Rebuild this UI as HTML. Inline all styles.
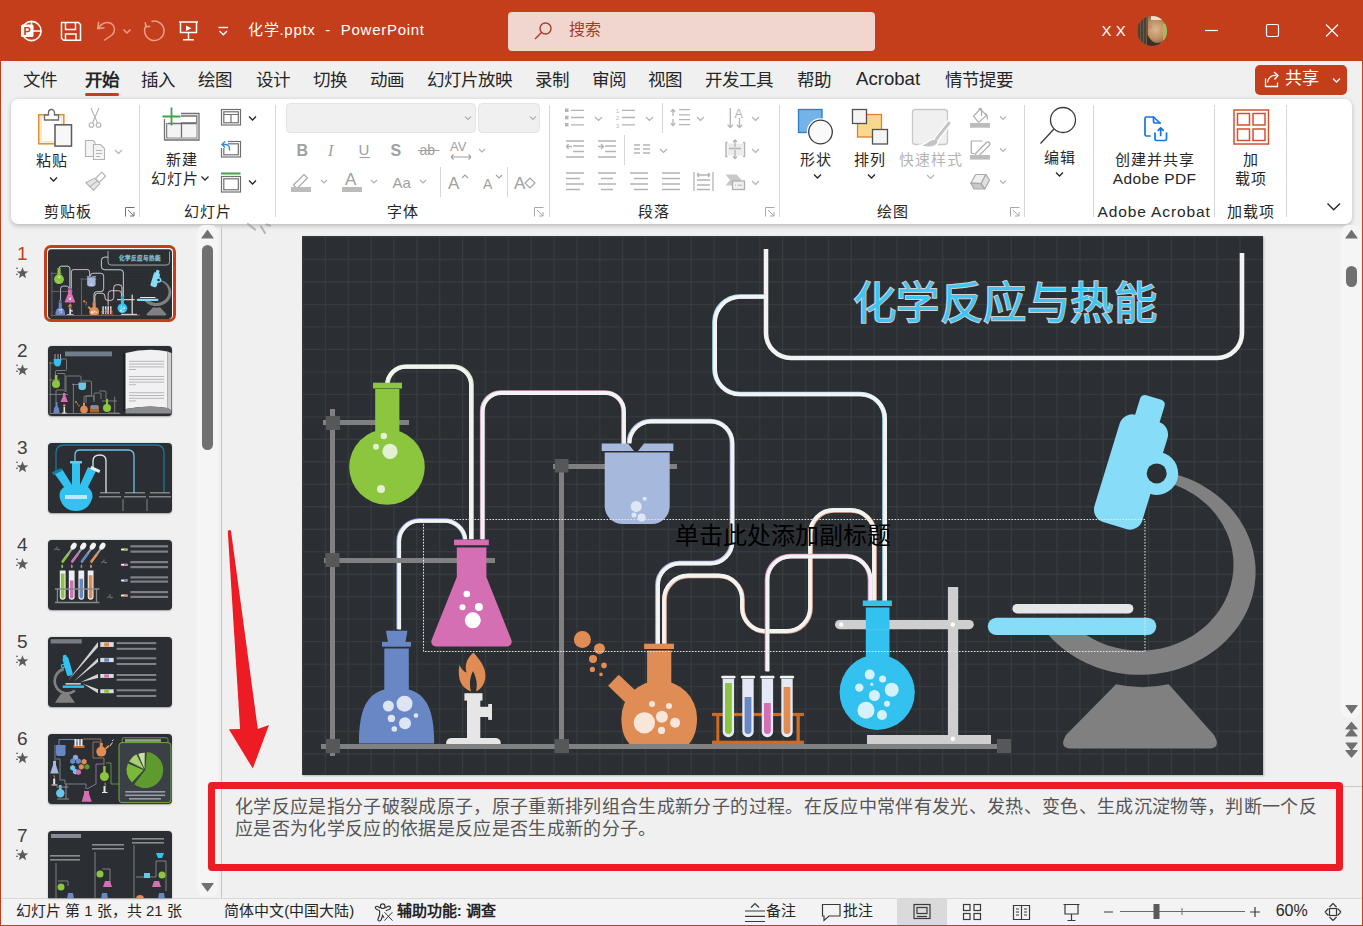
<!DOCTYPE html>
<html lang="zh-CN"><head><meta charset="utf-8">
<style>
*{margin:0;padding:0;box-sizing:border-box}
html,body{width:1363px;height:926px;overflow:hidden}
body{position:relative;background:#f0f0f0;font-family:"Liberation Sans",sans-serif;color:#262626}
.a{position:absolute}
#title{left:0;top:0;width:1363px;height:61px;background:#c43e1c}
#tabs{left:0;top:61px;width:1363px;height:37px;background:#f0f0f0}
.tab{position:absolute;top:68px;font-size:17.5px;line-height:24px;color:#262626;white-space:nowrap}
#ribbon{left:11px;top:98.5px;width:1341px;height:125.5px;background:#fff;border-radius:7px;box-shadow:0 1.5px 4px rgba(0,0,0,0.22)}
.lbl{position:absolute;font-size:14px;line-height:18px;color:#262626;white-space:nowrap}
.sep{position:absolute;width:1px;background:#d4d4d4}
#status{left:0;top:898px;width:1363px;height:28px;background:#f3f3f3;border-top:1px solid #d9d9d9}
.st{position:absolute;top:902px;font-size:15px;line-height:18px;color:#262626;white-space:nowrap}
</style></head>
<body>
<div id="title" class="a"></div>
<div id="tabs" class="a"></div>
<div id="ribbon" class="a"></div>
<div id="status" class="a"></div>

<!-- TITLE BAR CONTENT -->
<svg class="a" style="left:0;top:0" width="1363" height="61" viewBox="0 0 1363 61">
 <g fill="none" stroke="#fff" stroke-width="1.6">
  <circle cx="31.5" cy="31" r="9.6"/>
  <path d="M31.5 21.5V31H41"/>
 </g>
 <rect x="21" y="24.5" width="12.5" height="12.5" rx="1.5" fill="#fff"/>
 <text x="23.6" y="35" font-family="Liberation Sans" font-weight="bold" font-size="11" fill="#c43e1c">P</text>
 <!-- save -->
 <g fill="none" stroke="#fff" stroke-width="1.5">
  <path d="M61.5 22.5H78.5L80.5 24.5V40.2H63.5L61.5 38.2Z"/>
  <path d="M65.5 22.5V29.5H75.5V22.5"/>
  <path d="M65.5 40V34H76V40"/>
 </g>
 <!-- undo faded -->
 <g fill="none" stroke="#e8a08c" stroke-width="1.5">
  <path d="M98 28.5C101 24 104 22.5 107.5 22.5C111.5 22.5 114.5 25.5 114.5 29.5C114.5 32 113.5 33.5 112 35L104 40.5"/>
  <path d="M98.6 21.8L97.8 28.6L104.5 27.8"/>
  <path d="M123.5 29.5L127 33L130.5 29.5"/>
  <path d="M151.5 21.5A9.7 9.7 0 1 1 146.6 24.9"/>
  <path d="M145.2 22.2L145.9 26.8L150.2 26.2"/>
 </g>
 <!-- present -->
 <g fill="none" stroke="#fff" stroke-width="1.5">
  <path d="M179 22H198"/>
  <path d="M180.5 22V32.5H196.5V22"/>
  <path d="M188.5 32.5V39.5M183 39.8H194"/>
 </g>
 <path d="M186 25.5L191.5 28.2L186 31Z" fill="#fff"/>
 <g fill="none" stroke="#fff" stroke-width="1.4">
  <path d="M218.5 27.5H228"/>
  <path d="M219.5 31L223.3 34.8L227 31"/>
 </g>
 <!-- window controls -->
 <g fill="none" stroke="#fff" stroke-width="1.2">
  <path d="M1205 30.5H1218"/>
  <rect x="1266.5" y="24.5" width="12" height="12" rx="1.5"/>
  <path d="M1326 24.5L1338 36.5M1338 24.5L1326 36.5"/>
 </g>
</svg>
<div class="a" style="left:248px;top:20px;font-size:15px;line-height:20px;color:#fff;white-space:nowrap;letter-spacing:0.72px">化学.pptx&nbsp; - &nbsp;PowerPoint</div>
<div class="a" style="left:508px;top:11.5px;width:367px;height:39px;background:#f0d6cf;border-radius:4px"></div>
<svg class="a" style="left:530px;top:18px" width="26" height="26" viewBox="0 0 26 26">
 <g fill="none" stroke="#a8402a" stroke-width="1.4"><circle cx="15.5" cy="10.5" r="5.5"/><path d="M11.5 14.5L5 21"/></g>
</svg>
<div class="a" style="left:569px;top:19px;font-size:16px;line-height:22px;color:#a33a22;white-space:nowrap">搜索</div>
<div class="a" style="left:1101.5px;top:21.8px;font-size:15px;line-height:18px;color:#fff;white-space:nowrap">X X</div>
<svg class="a" style="left:1137px;top:16px" width="30" height="30" viewBox="0 0 30 30">
<defs><clipPath id="av"><circle cx="15" cy="15" r="15"/></clipPath>
<radialGradient id="face" cx="0.62" cy="0.45" r="0.5"><stop offset="0" stop-color="#d8b890"/><stop offset="0.6" stop-color="#c09060"/><stop offset="1" stop-color="#8a6a48"/></radialGradient></defs>
<g clip-path="url(#av)">
<rect width="30" height="30" fill="url(#face)"/>
<rect x="26" y="8" width="4" height="16" fill="#a8b860"/>
<rect x="14" y="0" width="16" height="4" fill="#e8e0d0"/>
<rect x="0" y="0" width="11" height="30" fill="#6a5a44"/>
<path d="M2 0V30M5 0V30M8 0V30" stroke="#3a3228" stroke-width="1.2"/>
<path d="M10 18Q16 30 24 26L22 30H10Z" fill="#3a3026"/>
<circle cx="13" cy="11" r="2" fill="#c88070" opacity="0.6"/>
</g>
</svg>


<!-- TABS -->
<div class="tab" style="left:22.9px">文件</div>
<div class="tab" style="left:84.7px;font-weight:bold">开始</div>
<div class="tab" style="left:141.1px">插入</div>
<div class="tab" style="left:198.4px">绘图</div>
<div class="tab" style="left:255.5px">设计</div>
<div class="tab" style="left:312.8px">切换</div>
<div class="tab" style="left:370.0px">动画</div>
<div class="tab" style="left:427.3px">幻灯片放映</div>
<div class="tab" style="left:534.8px">录制</div>
<div class="tab" style="left:592.0px">审阅</div>
<div class="tab" style="left:648.1px">视图</div>
<div class="tab" style="left:705.3px">开发工具</div>
<div class="tab" style="left:796.9px">帮助</div>
<div class="tab" style="left:856.0px;font-size:18.6px;top:67px">Acrobat</div>
<div class="tab" style="left:944.9px">情节提要</div>
<div class="a" style="left:85px;top:92.5px;width:34px;height:3px;border-radius:2px;background:#c43e1c"></div>
<div class="a" style="left:1255px;top:65px;width:92px;height:30px;border-radius:5px;background:#c43e1c"></div>
<svg class="a" style="left:1255px;top:65px" width="92" height="30" viewBox="0 0 92 30">
 <g fill="none" stroke="#fff" stroke-width="1.3">
  <path d="M10.5 13.5V21.5H22.5V17.5"/>
  <path d="M12.5 17.5C13 12.5 16.5 10 21.5 10.5"/>
  <path d="M19 7L23 10.5L19.5 14.5"/>
  <path d="M78 13.5L81.5 17L85 13.5"/>
 </g>
</svg>
<div class="a" style="left:1284.5px;top:67px;font-size:17px;line-height:24px;color:#fff;white-space:nowrap">共享</div>


<!-- RIBBON -->
<div class="a" style="left:-32.5px;top:202.5px;width:200px;text-align:center;font-size:15px;line-height:18px;color:#262626;white-space:nowrap;letter-spacing:1px;text-indent:1px">剪贴板</div>
<div class="a" style="left:107.8px;top:202.5px;width:200px;text-align:center;font-size:15px;line-height:18px;color:#262626;white-space:nowrap;letter-spacing:1px;text-indent:1px">幻灯片</div>
<div class="a" style="left:302.0px;top:202.5px;width:200px;text-align:center;font-size:15px;line-height:18px;color:#262626;white-space:nowrap;letter-spacing:1px;text-indent:1px">字体</div>
<div class="a" style="left:553.8px;top:202.5px;width:200px;text-align:center;font-size:15px;line-height:18px;color:#262626;white-space:nowrap;letter-spacing:1px;text-indent:1px">段落</div>
<div class="a" style="left:792.0px;top:202.5px;width:200px;text-align:center;font-size:15px;line-height:18px;color:#262626;white-space:nowrap;letter-spacing:1px;text-indent:1px">绘图</div>
<div class="a" style="left:1150.5px;top:202.5px;width:200px;text-align:center;font-size:15px;line-height:18px;color:#262626;white-space:nowrap;letter-spacing:1px;text-indent:1px">加载项</div>
<div class="a" style="left:1053.7px;top:202.5px;width:200px;text-align:center;font-size:15.5px;line-height:18px;color:#262626;white-space:nowrap;letter-spacing:0.9px;text-indent:0.9px">Adobe Acrobat</div>
<div class="a" style="left:-48.2px;top:151.5px;width:200px;text-align:center;font-size:15px;line-height:18px;color:#262626;white-space:nowrap;letter-spacing:1px;text-indent:1px">粘贴</div>
<div class="a" style="left:81.7px;top:150.5px;width:200px;text-align:center;font-size:15px;line-height:18px;color:#262626;white-space:nowrap;letter-spacing:1px;text-indent:1px">新建</div>
<div class="a" style="left:74.0px;top:169.5px;width:200px;text-align:center;font-size:15px;line-height:18px;color:#262626;white-space:nowrap;letter-spacing:1px;text-indent:1px">幻灯片</div>
<div class="a" style="left:715.6px;top:150.5px;width:200px;text-align:center;font-size:15px;line-height:18px;color:#262626;white-space:nowrap;letter-spacing:1px;text-indent:1px">形状</div>
<div class="a" style="left:769.8px;top:150.5px;width:200px;text-align:center;font-size:15px;line-height:18px;color:#262626;white-space:nowrap;letter-spacing:1px;text-indent:1px">排列</div>
<div class="a" style="left:830.0px;top:150.5px;width:200px;text-align:center;font-size:15px;line-height:18px;color:#b4b4b4;white-space:nowrap;letter-spacing:1px;text-indent:1px">快速样式</div>
<div class="a" style="left:959.0px;top:148.5px;width:200px;text-align:center;font-size:15px;line-height:18px;color:#262626;white-space:nowrap;letter-spacing:1px;text-indent:1px">编辑</div>
<div class="a" style="left:1054.6px;top:151px;width:200px;text-align:center;font-size:15px;line-height:18px;color:#262626;white-space:nowrap;letter-spacing:1px;text-indent:1px">创建并共享</div>
<div class="a" style="left:1054.4px;top:169.5px;width:200px;text-align:center;font-size:15.5px;line-height:18px;color:#262626;white-space:nowrap;letter-spacing:0.4px;text-indent:0.4px">Adobe PDF</div>
<div class="a" style="left:1150.5px;top:151px;width:200px;text-align:center;font-size:15px;line-height:18px;color:#262626;white-space:nowrap;letter-spacing:1px;text-indent:1px">加</div>
<div class="a" style="left:1150.5px;top:169.5px;width:200px;text-align:center;font-size:15px;line-height:18px;color:#262626;white-space:nowrap;letter-spacing:1px;text-indent:1px">载项</div>
<svg class="a" style="left:0;top:98px" width="1363" height="126" viewBox="0 98 1363 126">
<g fill="none" stroke="#d6d6d6" stroke-width="1">
 <path d="M139.5 105V217M275.5 105V217M549.5 105V217M779.5 105V217M1024.5 105V217M1093.5 105V217M1214.5 105V217M1286.5 105V217"/>
 <path d="M662.5 103V133M624.5 135V165M440.5 167V197M507.5 167V197"/>
</g>
<!-- font boxes -->
<rect x="286.5" y="103.5" width="189" height="29" rx="4" fill="#f0f0f0" stroke="#e3e3e3"/>
<rect x="478.5" y="103.5" width="61" height="29" rx="4" fill="#f0f0f0" stroke="#e3e3e3"/>
<!-- launchers -->
<g fill="none" stroke="#707070" stroke-width="1">
 <path d="M125.5 216.5V207.5H134.5M128 210L134 216M134 212V216H130"/>
</g>
<g fill="none" stroke="#a8a8a8" stroke-width="1">
 <path d="M534.5 216.5V207.5H543.5M537 210L543 216M543 212V216H539"/>
 <path d="M765.5 216.5V207.5H774.5M768 210L774 216M774 212V216H770"/>
 <path d="M1010.5 216.5V207.5H1019.5M1013 210L1019 216M1019 212V216H1015"/>
</g>
<!-- chevrons dark -->
<g fill="none" stroke="#262626" stroke-width="1.3">
 <path d="M50 177.5L53.5 181L57 177.5"/>
 <path d="M201.5 176.5L205 180L208.5 176.5"/>
 <path d="M249 116.5L252.5 120L256 116.5"/>
 <path d="M249 180.5L252.5 184L256 180.5"/>
 <path d="M814 174.5L817.5 178L821 174.5"/>
 <path d="M868 174.5L871.5 178L875 174.5"/>
 <path d="M1056 172.5L1059.5 176L1063 172.5"/>
 <path d="M1327.5 203.5L1333.7 209.8L1340 203.5"/>
</g>
<!-- chevrons faded -->
<g fill="none" stroke="#b0b0b0" stroke-width="1.1">
 <path d="M115 150L118.5 153.5L122 150"/>
 <path d="M465 116.5L468 119.5L471 116.5M530 116.5L533 119.5L536 116.5"/>
 <path d="M479 149L482 152L485 149M321 180L324 183L327 180M371 180L374 183L377 180M420 180L423 183L426 180"/>
 <path d="M595 117L598.5 120.5L602 117M646 117L649.5 120.5L653 117M697 117L700.5 120.5L704 117M752 117L755.5 120.5L759 117"/>
 <path d="M660 149L663.5 152.5L667 149M752 149L755.5 152.5L759 149M752 181L755.5 184.5L759 181"/>
 <path d="M927 175L930.5 178.5L934 175M1000 116.5L1003 119.5L1006 116.5M1000 148.5L1003 151.5L1006 148.5M1000 180.5L1003 183.5L1006 180.5"/>
</g>
<!-- paste -->
<rect x="38.8" y="114.8" width="25" height="29" fill="#fff" stroke="#e8912d" stroke-width="1.6"/>
<rect x="41" y="117" width="20.6" height="24.6" fill="#fff" stroke="#fbe3b0" stroke-width="1.4"/>
<path d="M44.5 120V115H48.5V112.5A3 3 0 0 1 54.5 112.5V115H58.5V120Z" fill="#fff" stroke="#6b6b6b" stroke-width="1.3"/>
<rect x="55" y="124.8" width="16.5" height="21.3" fill="#f7f7f7" stroke="#5a5a5a" stroke-width="1.5"/>
<!-- scissors -->
<g fill="none" stroke="#b4b4b4" stroke-width="1.1">
 <path d="M91 108L97.5 123M99 108L92.5 123"/>
 <circle cx="91.5" cy="125" r="2.3"/><circle cx="98.5" cy="125" r="2.3"/>
</g>
<!-- copy -->
<g fill="#f4f4f4" stroke="#b4b4b4" stroke-width="1.1">
 <path d="M85.5 140.5H93L95 142.5V156.5H85.5Z"/>
 <path d="M93.5 144.5H100.5L104.5 148.5V159.5H93.5Z"/>
 <path d="M96 150.5H102M96 153.5H102M96 156.5H100" fill="none"/>
</g>
<!-- brush -->
<g stroke="#b4b4b4" stroke-width="1.1" stroke-linejoin="round">
 <path d="M101.8 172.2L105.6 176L99.3 182.3L95.5 178.5Z" fill="#fff"/>
 <path d="M85.8 182.5L94.8 178.2L99.8 183.6L93.6 190.3Z" fill="#e6e6e6"/>
 <path d="M89.5 187L97.3 180.9" fill="none"/>
</g>
<!-- new slide -->
<g fill="none" stroke="#707070" stroke-width="1.3">
 <path d="M164.5 119V140H199V113.5H181"/>
 <path d="M166.8 123V137.8H196.8V116H181"/>
 <path d="M181.5 123V137.5M181 123H196.5"/>
</g>
<rect x="167.5" y="123.5" width="29" height="14" fill="#f4f4f4"/>
<path d="M181.5 123.5V137.5M167.5 123.5H196.5" stroke="#707070" stroke-width="1.3"/>
<path d="M171.5 107.5V125.5M162.5 116.5H180.5" stroke="#3ea34b" stroke-width="1.8"/>
<!-- layout -->
<g fill="none" stroke="#707070" stroke-width="1.2">
 <rect x="221.5" y="109.5" width="19" height="15.5"/>
 <rect x="223.8" y="111.8" width="14.5" height="11"/>
 <path d="M223.8 114.5H238.3M231 114.5V122.8"/>
 <rect x="221.5" y="141.5" width="19" height="15.5"/>
 <rect x="223.8" y="143.8" width="14.5" height="11"/>
 <rect x="221.5" y="176.5" width="19" height="15.5"/>
 <rect x="223.8" y="178.8" width="14.5" height="11"/>
</g>
<path d="M221 173.5H240.5" stroke="#3ea34b" stroke-width="2"/>
<rect x="220" y="139" width="8" height="9" fill="#fff"/>
<path d="M222.5 144.5H225.5A4 4 0 0 1 229.5 148.5V150.5" fill="none" stroke="#2a8ad4" stroke-width="1.4"/>
<path d="M225 141.5L222 144.5L225 147.5" fill="none" stroke="#2a8ad4" stroke-width="1.4"/>
<!-- font boxes moved -->
<g fill="#a0a0a0" font-family="Liberation Sans">
 <text x="296.5" y="156" font-size="16" font-weight="bold">B</text>
 <text x="328" y="156" font-size="16" font-style="italic" font-family="Liberation Serif">I</text>
 <text x="358.5" y="155" font-size="15">U</text>
 <text x="390.5" y="156" font-size="16" font-weight="bold">S</text>
 <text x="419.5" y="155" font-size="14">ab</text>
 <text x="450" y="151" font-size="13">AV</text>
 <text x="392.5" y="188" font-size="15">Aa</text>
 <text x="448" y="189" font-size="17">A</text>
 <text x="483" y="189" font-size="14">A</text>
 <text x="514" y="189" font-size="17">A</text>
</g>
<g fill="none" stroke="#a0a0a0" stroke-width="1.1">
 <path d="M359.5 157.5H370"/>
 <path d="M418 150.5H439.5"/>
 <path d="M451 157H471M451 157L453.5 154.5M451 157L453.5 159.5M471 157L468.5 154.5M471 157L468.5 159.5"/>
 <path d="M462 178L465 175L468 178M496 175L499 178L502 175"/>
 <path d="M525 183L530 178L535 183L530 188Z" fill="#fff"/>
</g>
<path d="M293.5 185L304 174.5L307.5 178L297 188.5Z" fill="#fff" stroke="#a8a8a8" stroke-width="1.2"/>
<rect x="291" y="187" width="20" height="5" fill="#bcbcbc"/>
<rect x="342" y="187" width="20" height="5" fill="#bcbcbc"/>
<text x="345" y="185" font-family="Liberation Sans" font-size="17" fill="#a0a0a0">A</text>
<!-- paragraph -->
<g fill="#b4b4b4">
 <rect x="565" y="108.5" width="3.5" height="3.5"/><rect x="565" y="115.8" width="3.5" height="3.5"/><rect x="565" y="123" width="3.5" height="3.5"/>
</g>
<g fill="none" stroke="#b4b4b4" stroke-width="1.3">
 <path d="M571 110.3H584M571 117.5H584M571 124.8H584"/>
 <path d="M622 110.3H635M622 117.5H635M622 124.8H635"/>
 <path d="M679 109.7H690M679 114.8H690M679 119.7H690M679 124.7H690M673 109.5V116M670.8 111.7L673 109.5L675.2 111.7M673 119V125.5M670.8 123.3L673 125.5L675.2 123.3"/>
 <path d="M730.3 108V127.5M727.6 124.8L730.3 127.5L733 124.8M739.5 118V127.5M736.8 124.8L739.5 127.5L742.2 124.8"/>
 <path d="M566 141H584M573 146H584M573 151.5H584M566 157H584M568.5 149L566.5 146.5 568.5 144M566.5 146.5H572"/>
 <path d="M598 141H616M605 146H616M605 151.5H616M598 157H616M601 144L603.5 146.5L601 149M598 146.5H603.5"/>
 <path d="M634 145H640M643 145H650M634 149H640M643 149H650M634 153H640M643 153H650"/>
 <path d="M727.5 142.5H726V156.5H727.5M743 142.5H744.5V156.5H743" stroke-width="1.5"/>
 <rect x="727.5" y="143.5" width="15.5" height="12" fill="#ececec" stroke="none"/>
 <path d="M729 148.5H741M735 140V147M733 142L735 140L737 142M735 150V158.5M733 156.5L735 158.5L737 156.5"/>
 <path d="M566 173H584M566 178.5H580M566 184H584M566 189.5H580"/>
 <path d="M598 173H616M601 178.5H613M598 184H616M601 189.5H613"/>
 <path d="M630 173H648M634 178.5H648M630 184H648M634 189.5H648"/>
 <path d="M662 173H680M662 178.5H680M662 184H680M662 189.5H680"/>
 <path d="M694 172V191M713 172V191M697 180H710M697 185H710M697 189.5H710M697 175H710M697 175L699 173M697 175L699 177M710 175L708 173M710 175L708 177"/>
</g>
<text x="616" y="112.5" font-family="Liberation Sans" font-size="5.5" fill="#b4b4b4">1</text>
<text x="616" y="120" font-family="Liberation Sans" font-size="5.5" fill="#b4b4b4">2</text>
<text x="616" y="127.5" font-family="Liberation Sans" font-size="5.5" fill="#b4b4b4">3</text>
<text x="734.5" y="117.8" font-family="Liberation Sans" font-size="12.5" fill="#b4b4b4">A</text>
<path d="M725.5 174.5H736.5L741.5 180L736.5 185.5H725.5L730 180Z" fill="#c8c8c8"/>
<rect x="732.5" y="181" width="12" height="8.5" fill="#f0f0f0" stroke="#b0b0b0" stroke-width="1.3"/>
<path d="M735 185.2H736M737.5 185.2H742" stroke="#b0b0b0" stroke-width="1"/>
<!-- shapes -->
<rect x="798.5" y="109.5" width="23.5" height="23" fill="#74b3e8" stroke="#2a7ccf" stroke-width="1.3"/>
<circle cx="820.5" cy="132" r="12.4" fill="#fff" stroke="#fff" stroke-width="2.6"/><circle cx="820.5" cy="132" r="11.8" fill="#fafafa" stroke="#3c3c3c" stroke-width="1.3"/>
<!-- arrange -->
<rect x="857.5" y="114.5" width="24" height="22.5" fill="#f7d88e" stroke="#e1812c" stroke-width="1.3"/>
<rect x="852.5" y="109.5" width="14" height="14" fill="#f4f4f4" stroke="#505050" stroke-width="1.3"/>
<rect x="872.5" y="129.5" width="15" height="14.5" fill="#f4f4f4" stroke="#505050" stroke-width="1.3"/>
<!-- quick styles -->
<rect x="912.5" y="109.5" width="35" height="35" rx="3" fill="#f0f0f0" stroke="#c8c8c8" stroke-width="1.3"/>
<path d="M949 123L936.5 139" stroke="#fff" stroke-width="5.5" stroke-linecap="round"/>
<path d="M936 140C930 139 928 144 922 145.5C929 148 938 146 937.5 141Z" fill="#fff" stroke="#fff" stroke-width="3"/>
<path d="M949 123L936.5 139" stroke="#c4c4c4" stroke-width="3" stroke-linecap="round"/>
<path d="M936 140C930 139 928 144 922 145.5C929 148 938 146 937.5 141Z" fill="#c4c4c4"/>
<!-- fill/outline/effects -->
<g fill="none" stroke="#aaaaaa" stroke-width="1.2" stroke-linejoin="round">
 <path d="M973.5 116.2L980.3 109.2L986.6 115.4L978.6 122.4Z" fill="#fff"/>
 <path d="M979 110.5C979 107.5 981.5 107.5 981.5 110.5V116"/>
 <path d="M985 113.5C987 114 987.5 116 987.5 119.5"/>
 <path d="M971.3 153.5V141H982.7M971.3 153.5H974.6"/>
 <path d="M976 153L986.5 142.5A1.8 1.8 0 0 1 989.3 145.3L978.8 155.8L975 157Z" fill="#fff"/>
 <path d="M970.8 183.2L975.7 174.5H985.9L981 183.7Z" fill="#f0f0f0"/>
 <path d="M985.9 174.5L989.5 180L984.8 189L981 183.7Z" fill="#e0e0e0"/>
 <path d="M970.8 183.2L974 189H984.8L981 183.7Z" fill="#c8c8c8"/>
</g>
<rect x="970" y="123" width="20" height="4.7" fill="#bcbcbc"/>
<rect x="970" y="155" width="20" height="4.6" fill="#bcbcbc"/>
<!-- edit -->
<g fill="none" stroke="#3a3a3a" stroke-width="1.3">
 <circle cx="1063" cy="120" r="12.5"/>
 <path d="M1054 129L1040.5 143.5"/>
</g>
<!-- adobe pdf -->
<g fill="none" stroke="#1473e6" stroke-width="1.7" stroke-linejoin="round" stroke-linecap="round">
 <path d="M1150 136H1146.5Q1145 136 1145 134.5V118.5Q1145 117 1146.5 117H1153.5L1160 123"/>
 <path d="M1153.5 117V121.5Q1153.5 123 1155 123H1160"/>
 <path d="M1155 133V139Q1155 140.5 1156.5 140.5H1165Q1166.5 140.5 1166.5 139V133"/>
 <path d="M1160.7 135.5V128M1158.2 130.3L1160.7 127.8L1163.2 130.3"/>
</g>
<!-- add-ins -->
<g fill="none" stroke="#d35230" stroke-width="1.5">
 <rect x="1234" y="110" width="34.5" height="34"/>
 <rect x="1237.5" y="113.5" width="12" height="11.5"/>
 <rect x="1253" y="113.5" width="12" height="11.5"/>
 <rect x="1237.5" y="129" width="12" height="11.5"/>
 <rect x="1253" y="129" width="12" height="11.5"/>
</g>
</svg>


<!-- SLIDE -->
<svg width="0" height="0" style="position:absolute">
<defs>
<symbol id="s1" viewBox="302 236 961 539">
<rect x="302" y="236" width="961" height="539" fill="#2b2f33"/>
<path d="M302.50 236V774M325.37 236V774M348.23 236V774M371.10 236V774M393.96 236V774M416.83 236V774M439.70 236V774M462.56 236V774M485.43 236V774M508.29 236V774M531.16 236V774M554.03 236V774M576.89 236V774M599.76 236V774M622.62 236V774M645.49 236V774M668.36 236V774M691.22 236V774M714.09 236V774M736.95 236V774M759.82 236V774M782.69 236V774M805.55 236V774M828.42 236V774M851.28 236V774M874.15 236V774M897.02 236V774M919.88 236V774M942.75 236V774M965.61 236V774M988.48 236V774M1011.35 236V774M1034.21 236V774M1057.08 236V774M1079.94 236V774M1102.81 236V774M1125.68 236V774M1148.54 236V774M1171.41 236V774M1194.27 236V774M1217.14 236V774M1240.01 236V774M302 237.00H1263M302 259.48H1263M302 281.96H1263M302 304.44H1263M302 326.92H1263M302 349.40H1263M302 371.88H1263M302 394.36H1263M302 416.84H1263M302 439.32H1263M302 461.80H1263M302 484.28H1263M302 506.76H1263M302 529.24H1263M302 551.72H1263M302 574.20H1263M302 596.68H1263M302 619.16H1263M302 641.64H1263M302 664.12H1263M302 686.60H1263M302 709.08H1263M302 731.56H1263M302 754.04H1263" stroke="#363b3e" stroke-width="1.4" fill="none"/>
<!-- tubes -->
<g fill="none" stroke-width="4.6" stroke-linecap="butt">
 <path d="M766 249V333A25 25 0 0 0 791 358H1217A25 25 0 0 0 1242 333V253" stroke="#f3f3f3"/>
 <path d="M766 296.5H740A25.5 25.5 0 0 0 714.5 322V369A25 25 0 0 0 739.5 394H860A24.5 24.5 0 0 1 884.5 418.5V601" stroke="#a8dcf0"/>
 <path d="M766 296.5H740A25.5 25.5 0 0 0 714.5 322V369A25 25 0 0 0 739.5 394H860A24.5 24.5 0 0 1 884.5 418.5V601" stroke="#f3f3f3" stroke-width="3.8" transform="translate(0.6 0.4)"/>
 <path d="M387.5 385A18.5 18.5 0 0 1 406 366.5H453A18.5 18.5 0 0 1 471.5 385V539" stroke="#c8e0b0"/>
 <path d="M387.5 385A18.5 18.5 0 0 1 406 366.5H453A18.5 18.5 0 0 1 471.5 385V539" stroke="#f3f3f3" stroke-width="3.8" transform="translate(-0.5 0.3)"/>
 <path d="M482.2 539V411A18.5 18.5 0 0 1 500.7 392.5H605A18.5 18.5 0 0 1 623.5 411V444" stroke="#d8a0c8"/>
 <path d="M482.2 539V411A18.5 18.5 0 0 1 500.7 392.5H605A18.5 18.5 0 0 1 623.5 411V444" stroke="#f3f3f3" stroke-width="3.8" transform="translate(0.5 0.5)"/>
 <path d="M629 443A22 22 0 0 1 651 421H710A22 22 0 0 1 732 443V541A22 22 0 0 1 710 563H679.5A22 22 0 0 0 657.5 585V644" stroke="#a8b8e0"/>
 <path d="M629 443A22 22 0 0 1 651 421H710A22 22 0 0 1 732 443V541A22 22 0 0 1 710 563H679.5A22 22 0 0 0 657.5 585V644" stroke="#f3f3f3" stroke-width="3.8" transform="translate(0.5 0.5)"/>
 <path d="M664.5 644V600A24 24 0 0 1 688.5 576H719A23.5 23.5 0 0 1 742.5 599.5V608A23.5 23.5 0 0 0 766 631.5H787A23.5 23.5 0 0 0 810.5 608V534A23.5 23.5 0 0 1 834 510.5H851A23.5 23.5 0 0 1 874.5 534V601" stroke="#e8b090"/>
 <path d="M664.5 644V600A24 24 0 0 1 688.5 576H719A23.5 23.5 0 0 1 742.5 599.5V608A23.5 23.5 0 0 0 766 631.5H787A23.5 23.5 0 0 0 810.5 608V534A23.5 23.5 0 0 1 834 510.5H851A23.5 23.5 0 0 1 874.5 534V601" stroke="#f3f3f3" stroke-width="3.8" transform="translate(-0.5 -0.5)"/>
 <path d="M767 671V579.5A23.5 23.5 0 0 1 790.5 556H846.5A23.5 23.5 0 0 1 870 579.5V601" stroke="#e090c8"/>
 <path d="M767 671V579.5A23.5 23.5 0 0 1 790.5 556H846.5A23.5 23.5 0 0 1 870 579.5V601" stroke="#f3f3f3" stroke-width="3.8" transform="translate(0.5 0.5)"/>
 <path d="M398.7 629V541A20.5 20.5 0 0 1 419.2 520.5H444A21 21 0 0 1 465 539" stroke="#90a8e0"/>
 <path d="M398.7 629V541A20.5 20.5 0 0 1 419.2 520.5H444A21 21 0 0 1 465 539" stroke="#f3f3f3" stroke-width="3.8" transform="translate(0.5 0.4)"/>
</g>
<!-- stands -->
<g fill="#808080">
 <rect x="330" y="409" width="5" height="347"/>
 <rect x="323" y="420" width="86" height="5"/>
 <rect x="324" y="558" width="171" height="5"/>
 <rect x="559" y="459" width="5" height="290"/>
 <rect x="553" y="464" width="124" height="5"/>
 <rect x="321" y="744" width="680" height="5"/>
</g>
<g fill="#555759">
 <rect x="326" y="416" width="14" height="14"/>
 <rect x="325.5" y="553" width="14" height="14"/>
 <rect x="326" y="739" width="14" height="14"/>
 <rect x="555" y="459" width="13.5" height="13.5"/>
 <rect x="554.5" y="739" width="14.5" height="14"/>
 <rect x="997" y="739" width="14" height="14"/>
</g>
<!-- green flask -->
<g fill="#8cc63f">
 <rect x="373" y="382.7" width="29" height="5.8"/>
 <rect x="375.2" y="389" width="24.2" height="45"/>
 <circle cx="387" cy="467" r="37.8"/>
</g>
<g fill="#e3f0d3">
 <circle cx="383.8" cy="436" r="3.2"/><circle cx="376" cy="446.8" r="3"/><circle cx="390" cy="451.4" r="7.6"/><circle cx="381" cy="489" r="4"/>
</g>
<!-- pink flask -->
<g fill="#d46fb4">
 <rect x="454" y="539.6" width="34.8" height="5.6"/>
 <path d="M456.8 547.5H486.4V577L511 639A5 5 0 0 1 507 646.6H436A5 5 0 0 1 432 639L456.8 577Z"/>
</g>
<g fill="#fff">
 <circle cx="466.8" cy="594" r="3.3"/><circle cx="462.5" cy="607.3" r="3"/><circle cx="478.9" cy="607" r="4"/><circle cx="472.8" cy="620.3" r="8"/>
</g>
<!-- blue bottle -->
<g fill="#6a87c5">
 <path d="M386 630.8H407.4L405.5 642H387.9Z"/>
 <rect x="382" y="642" width="29" height="4.7"/>
 <path d="M384.3 648.5H408.8V689.5C426 694 434.5 710 434.2 743.4H359C358.8 710 367 694 384.3 689.5Z"/>
</g>
<g fill="#dde4f3">
 <circle cx="388.4" cy="706" r="5.5"/><circle cx="404.5" cy="703.7" r="8"/><circle cx="391.4" cy="718.4" r="3.7"/><circle cx="405" cy="723.2" r="6"/><circle cx="416" cy="715.6" r="2.3"/><circle cx="394.3" cy="729" r="2.8"/>
</g>
<!-- burner -->
<g fill="#e6e6e6">
 <rect x="464.4" y="693.2" width="18.1" height="7.4"/>
 <rect x="467" y="700" width="13.3" height="39"/>
 <rect x="480" y="706.8" width="9" height="10.2"/>
 <rect x="488.2" y="704" width="3.8" height="15.9"/>
 <path d="M451.2 738H495.7A5 5 0 0 1 500.7 744H446.2A5 5 0 0 1 451.2 738Z"/>
</g>
<path d="M471 691.5C462 688 457 680 459.3 664.9C462 670 465 672 466.5 672.5C464 664 468 657 473.5 652.4C480 660 486 667 485.4 677C485 684 481 689 476 691.5C478 684 476 677 473 671C470 677 469 684 471 691.5Z" fill="#e08d55"/>
<!-- beaker -->
<g fill="#a6b9dd">
 <path d="M601.7 443.5H628L634 451H601.7Z"/>
 <path d="M673.4 443.5H644L638 451H673.4Z"/>
 <path d="M604.7 452.5H669.7V506A18 18 0 0 1 651.7 524H622.7A18 18 0 0 1 604.7 506Z"/>
</g>
<g fill="#dfe7f6">
 <circle cx="636.2" cy="506.4" r="5.5"/><circle cx="644.6" cy="498.8" r="2"/><circle cx="634" cy="515" r="2.5"/><circle cx="641.6" cy="517.5" r="4"/>
</g>
<!-- orange flask -->
<g fill="#e08d55">
 <rect x="644.1" y="643.7" width="29.9" height="5.3"/>
 <rect x="647.1" y="650.5" width="24.2" height="40"/>
 <path d="M621.4 718.3A37.8 37.8 0 0 1 697 718.3C697 730 694 738 689 744H629.5C624 738 621.4 730 621.4 718.3Z"/>
 <path d="M608.1 685.8L618.7 674.7L636 691L626 703Z"/>
 <circle cx="582.4" cy="639.4" r="8.5"/><circle cx="599.5" cy="648.7" r="5.5"/><circle cx="593" cy="659" r="4"/><circle cx="604" cy="665.4" r="2.8"/><circle cx="592.4" cy="669.4" r="2.6"/><circle cx="601" cy="674.4" r="1.8"/>
</g>
<g fill="#f8e6da">
 <circle cx="644.4" cy="722.8" r="10.6"/><circle cx="661.9" cy="716.8" r="6"/><circle cx="675.1" cy="722.8" r="5"/><circle cx="652" cy="703.9" r="3"/><circle cx="669" cy="705.9" r="3"/><circle cx="661.5" cy="730.4" r="3.6"/>
</g>
<!-- test tubes -->
<g fill="#cd6a24">
 <rect x="712" y="712.9" width="92" height="3.2"/>
 <rect x="716.3" y="714" width="3" height="28"/>
 <rect x="796.5" y="714" width="3.3" height="28"/>
 <rect x="712" y="740.7" width="92" height="3.4"/>
</g>
<g id="tt">
</g>
<rect x="721.2" y="675.8" width="14.4" height="2.6" rx="1.3" fill="#f4f4f4"/>
<path d="M722.7 679H734.1V731.5A5.7 5.7 0 0 1 722.7 731.5Z" fill="#e4e9f5"/>
<path d="M725.0 682.9H731.8V730.5A3.4 3.4 0 0 1 725.0 730.5Z" fill="#8cc63f"/>
<rect x="740.8" y="675.8" width="14.4" height="2.6" rx="1.3" fill="#f4f4f4"/>
<path d="M742.3 679H753.7V731.5A5.7 5.7 0 0 1 742.3 731.5Z" fill="#e4e9f5"/>
<path d="M744.6 696.9H751.4V730.5A3.4 3.4 0 0 1 744.6 730.5Z" fill="#6a87c5"/>
<rect x="760.2" y="675.8" width="14.4" height="2.6" rx="1.3" fill="#f4f4f4"/>
<path d="M761.7 679H773.1V731.5A5.7 5.7 0 0 1 761.7 731.5Z" fill="#e4e9f5"/>
<path d="M764.0 703H770.8V730.5A3.4 3.4 0 0 1 764.0 730.5Z" fill="#d46fb4"/>
<rect x="779.8" y="675.8" width="14.4" height="2.6" rx="1.3" fill="#f4f4f4"/>
<path d="M781.3 679H792.7V731.5A5.7 5.7 0 0 1 781.3 731.5Z" fill="#e4e9f5"/>
<path d="M783.6 687H790.4V730.5A3.4 3.4 0 0 1 783.6 730.5Z" fill="#e08d55"/>
<!-- blue flask -->
<g fill="#33c2ef">
 <rect x="862.8" y="600.5" width="29.1" height="5.5"/>
 <rect x="865.8" y="607.5" width="23.7" height="56"/>
 <circle cx="877.2" cy="692.3" r="37.6"/>
</g>
<!-- ring stand -->
<g fill="#d0cfcf">
 <rect x="947.9" y="587" width="10.3" height="150"/>
 <rect x="835" y="620" width="138.8" height="9.2" rx="4.6"/>
 <rect x="867" y="735" width="124" height="9"/>
</g>
<rect x="865.8" y="619.9" width="23.7" height="9.4" fill="#33c2ef"/>
<g fill="#d4f1fc">
 <circle cx="869.7" cy="674.6" r="5"/><circle cx="882.6" cy="678.9" r="3.5"/><circle cx="859.3" cy="687.6" r="4.2"/><circle cx="871.8" cy="684.3" r="1.5"/><circle cx="891.7" cy="689.7" r="7"/><circle cx="874.4" cy="695.5" r="5.5"/><circle cx="887" cy="703.8" r="3"/><circle cx="866" cy="710.2" r="8.5"/><circle cx="882" cy="715" r="5"/>
</g>
<g fill="#fff"><circle cx="841.2" cy="624.5" r="2.2"/><circle cx="952.8" cy="624.5" r="2.2"/><circle cx="952.8" cy="738.7" r="2.2"/></g>
<!-- microscope -->
<path d="M1119.9 470.8 L1126.2 469.9 L1132.5 469.4 L1138.9 469.2 L1145.2 469.3 L1151.6 469.7 L1157.9 470.4 L1164.1 471.5 L1170.3 472.8 L1176.4 474.4 L1182.4 476.4 L1188.2 478.6 L1193.9 481.1 L1199.5 483.8 L1204.8 486.9 L1210.0 490.2 L1214.9 493.7 L1219.6 497.5 L1224.1 501.5 L1228.4 505.7 L1232.3 510.1 L1236.0 514.7 L1239.4 519.5 L1242.5 524.5 L1245.3 529.5 L1247.7 534.7 L1249.9 540.1 L1251.7 545.5 L1253.2 551.0 L1254.3 556.5 L1255.1 562.1 L1255.5 567.8 L1255.6 573.4 L1255.3 579.1 L1254.7 584.7 L1253.8 590.3 L1252.5 595.8 L1250.8 601.3 L1248.8 606.7 L1246.5 611.9 L1243.9 617.1 L1241.0 622.1 L1237.7 626.9 L1234.2 631.6 L1230.3 636.1 L1226.2 640.5 L1221.9 644.6 L1217.3 648.5 L1212.4 652.1 L1207.4 655.5 L1202.1 658.7 L1196.7 661.6 L1191.0 664.2 L1185.3 666.6 L1179.3 668.7 L1173.3 670.4 L1167.2 671.9 L1161.0 673.1 L1154.7 674.0 L1148.4 674.5 L1142.0 674.8 L1135.7 674.7 L1129.3 674.4 L1123.0 673.7 L1116.8 672.7 L1110.6 671.4 L1104.5 669.8 L1098.5 667.9 L1092.6 665.8 L1086.9 663.3 L1081.3 660.6 L1075.9 657.6 L1070.8 654.3 L1065.8 650.8 L1061.0 647.1 L1056.5 643.1 L1052.2 638.9 L1048.2 634.5 L1044.5 629.9 L1041.1 625.2 L1037.9 620.3 L1068.4 619.9 L1071.6 623.3 L1075.0 626.5 L1078.7 629.5 L1082.4 632.4 L1086.4 635.1 L1090.5 637.5 L1094.7 639.8 L1099.0 641.9 L1103.5 643.8 L1108.0 645.4 L1112.7 646.8 L1117.4 648.0 L1122.2 649.0 L1127.0 649.8 L1131.9 650.3 L1136.7 650.5 L1141.6 650.6 L1146.5 650.4 L1151.4 650.0 L1156.2 649.3 L1161.0 648.4 L1165.8 647.3 L1170.4 645.9 L1175.0 644.3 L1179.5 642.6 L1183.9 640.5 L1188.2 638.3 L1192.3 635.9 L1196.3 633.3 L1200.1 630.5 L1203.8 627.5 L1207.3 624.4 L1210.6 621.1 L1213.7 617.6 L1216.6 614.0 L1219.3 610.2 L1221.8 606.3 L1224.0 602.4 L1226.1 598.3 L1227.9 594.1 L1229.4 589.8 L1230.7 585.5 L1231.8 581.1 L1232.6 576.7 L1233.1 572.2 L1233.4 567.7 L1233.5 563.2 L1233.3 558.7 L1232.8 554.2 L1232.1 549.8 L1231.1 545.4 L1229.9 541.0 L1228.4 536.7 L1226.7 532.5 L1224.7 528.4 L1222.6 524.4 L1220.1 520.5 L1217.5 516.7 L1214.7 513.0 L1211.6 509.5 L1208.4 506.1 L1205.0 502.9 L1201.3 499.9 L1197.6 497.0 L1193.6 494.3 L1189.5 491.9 L1185.3 489.6 L1181.0 487.5 L1176.5 485.6 L1172.0 484.0 L1167.3 482.6 L1162.6 481.4 L1157.8 480.4 L1153.0 479.6 L1148.1 479.1 L1143.3 478.9 L1138.4 478.8 L1133.5 479.0 L1128.6 479.4 L1123.8 480.1Z" fill="#808080"/>
<path d="M1116 684.3Q1142 690 1168.7 684.3L1214 735Q1222 748.6 1208 748.6H1072Q1058 748.6 1066 735Z" fill="#808080"/>
<g transform="rotate(17 1131 472)" fill="#87dcf8">
 <rect x="1106" y="416" width="50" height="112" rx="13"/>
 <rect x="1118.2" y="394" width="25.6" height="36" rx="5"/>
</g>
<circle cx="1156.7" cy="473.4" r="21.5" fill="#87dcf8"/>
<circle cx="1156.7" cy="473.4" r="10" fill="#2b2f33"/>
<rect x="1012.4" y="603.9" width="121" height="9.5" rx="4.75" fill="#e6e6e6"/>
<rect x="987.8" y="617.7" width="168.5" height="17.3" rx="8.65" fill="#87dcf8"/>
<!-- title -->
<text transform="translate(852.5 318.5) scale(0.982 1)" x="0" y="0" font-family="Liberation Sans" font-size="44" font-weight="300" fill="#3ec5f3" stroke="#d0d0d0" stroke-width="2" paint-order="stroke">化学反应与热能</text>
</symbol>
</defs>
</svg>
<div class="a" style="left:302px;top:236px;width:961px;height:539px;box-shadow:1px 1px 2px rgba(0,0,0,0.25)"></div>
<svg class="a" style="left:302px;top:236px" width="961" height="539"><use href="#s1" width="961" height="539"/></svg>
<!-- placeholder -->
<svg class="a" style="left:422px;top:518px" width="726" height="136"><rect x="1.5" y="1.5" width="721.5" height="132" fill="none" stroke="#e6e6e6" stroke-width="1" stroke-dasharray="1.6 1.4"/></svg>
<div class="a" style="left:675px;top:519.5px;font-size:24px;line-height:32px;color:#000;white-space:nowrap">单击此处添加副标题</div>


<!-- LEFT PANE -->
<svg class="a" style="left:240px;top:222px" width="40" height="16" viewBox="240 222 40 16">
<g stroke="#8a8a8a" stroke-width="2.2" stroke-linecap="round" opacity="0.55" style="filter:blur(0.6px)">
<path d="M248 224L255 229.5M261 226.5L265 233M266.5 224.5L270 225.5"/>
</g></svg>

<div class="a" style="left:197px;top:225px;width:21px;height:672px;background:#f5f5f5;border-radius:8px"></div>
<div class="a" style="left:221px;top:224px;width:1px;height:674px;background:#c6c6c6"></div>
<div class="a" style="left:202px;top:245px;width:11px;height:205px;background:#707070;border-radius:5.5px"></div>
<svg class="a" style="left:190px;top:224px" width="30" height="674" viewBox="190 224 30 674">
<path d="M207.5 230.5L213 238H202Z" fill="#707070" stroke="#707070" stroke-width="1.2" stroke-linejoin="round"/>
<path d="M207.5 891L213 883.5H202Z" fill="#707070" stroke="#707070" stroke-width="1.2" stroke-linejoin="round"/>
</svg>
<div class="a" style="left:1341px;top:225px;width:20px;height:493px;background:#f5f5f5;border-radius:8px"></div>
<div class="a" style="left:1346px;top:266px;width:11px;height:21px;background:#707070;border-radius:5.5px"></div>
<svg class="a" style="left:1336px;top:224px" width="27" height="540" viewBox="1336 224 27 540">
<g fill="#707070" stroke="#707070" stroke-width="1.2" stroke-linejoin="round">
<path d="M1351.5 230.5L1357 238H1346Z"/>
<path d="M1351.5 713L1357 705.5H1346Z"/>
<path d="M1351.5 722.5L1357 729H1346Z"/><path d="M1351.5 729L1357 736H1346Z"/>
<path d="M1351.5 757L1357 750.5H1346Z"/><path d="M1351.5 750L1357 743H1346Z"/>
</g>
</svg>
<div class="a" style="left:17px;top:243.6px;font-size:19px;line-height:20px;color:#c43e1c">1</div>
<svg class="a" style="left:13px;top:266.7px" width="17" height="12" viewBox="0 0 17 12"><path d="M9.5 0.3L11 4.3L15.3 4.4L11.9 7L13.1 11.2L9.5 8.7L5.9 11.2L7.1 7L3.7 4.4L8 4.3Z" fill="#5a5a5a"/><path d="M3 1.2H5M3 7.3H5" stroke="#555" stroke-width="1.1"/></svg>
<div class="a" style="left:17px;top:340.7px;font-size:19px;line-height:20px;color:#404040">2</div>
<svg class="a" style="left:13px;top:363.8px" width="17" height="12" viewBox="0 0 17 12"><path d="M9.5 0.3L11 4.3L15.3 4.4L11.9 7L13.1 11.2L9.5 8.7L5.9 11.2L7.1 7L3.7 4.4L8 4.3Z" fill="#5a5a5a"/><path d="M3 1.2H5M3 7.3H5" stroke="#555" stroke-width="1.1"/></svg>
<div class="a" style="left:17px;top:437.8px;font-size:19px;line-height:20px;color:#404040">3</div>
<svg class="a" style="left:13px;top:460.9px" width="17" height="12" viewBox="0 0 17 12"><path d="M9.5 0.3L11 4.3L15.3 4.4L11.9 7L13.1 11.2L9.5 8.7L5.9 11.2L7.1 7L3.7 4.4L8 4.3Z" fill="#5a5a5a"/><path d="M3 1.2H5M3 7.3H5" stroke="#555" stroke-width="1.1"/></svg>
<div class="a" style="left:17px;top:534.9px;font-size:19px;line-height:20px;color:#404040">4</div>
<svg class="a" style="left:13px;top:558.0px" width="17" height="12" viewBox="0 0 17 12"><path d="M9.5 0.3L11 4.3L15.3 4.4L11.9 7L13.1 11.2L9.5 8.7L5.9 11.2L7.1 7L3.7 4.4L8 4.3Z" fill="#5a5a5a"/><path d="M3 1.2H5M3 7.3H5" stroke="#555" stroke-width="1.1"/></svg>
<div class="a" style="left:17px;top:632.0px;font-size:19px;line-height:20px;color:#404040">5</div>
<svg class="a" style="left:13px;top:655.1px" width="17" height="12" viewBox="0 0 17 12"><path d="M9.5 0.3L11 4.3L15.3 4.4L11.9 7L13.1 11.2L9.5 8.7L5.9 11.2L7.1 7L3.7 4.4L8 4.3Z" fill="#5a5a5a"/><path d="M3 1.2H5M3 7.3H5" stroke="#555" stroke-width="1.1"/></svg>
<div class="a" style="left:17px;top:729.1px;font-size:19px;line-height:20px;color:#404040">6</div>
<svg class="a" style="left:13px;top:752.2px" width="17" height="12" viewBox="0 0 17 12"><path d="M9.5 0.3L11 4.3L15.3 4.4L11.9 7L13.1 11.2L9.5 8.7L5.9 11.2L7.1 7L3.7 4.4L8 4.3Z" fill="#5a5a5a"/><path d="M3 1.2H5M3 7.3H5" stroke="#555" stroke-width="1.1"/></svg>
<div class="a" style="left:17px;top:826.2px;font-size:19px;line-height:20px;color:#404040">7</div>
<svg class="a" style="left:13px;top:849.3px" width="17" height="12" viewBox="0 0 17 12"><path d="M9.5 0.3L11 4.3L15.3 4.4L11.9 7L13.1 11.2L9.5 8.7L5.9 11.2L7.1 7L3.7 4.4L8 4.3Z" fill="#5a5a5a"/><path d="M3 1.2H5M3 7.3H5" stroke="#555" stroke-width="1.1"/></svg>
<div class="a" style="left:44px;top:244.8px;width:132px;height:77.7px;border:3px solid #c43e1c;border-radius:7px;background:#fafafa"></div>
<div class="a" style="left:48px;top:248.5px;width:124.3px;height:70.3px;border-radius:4px;overflow:hidden"><svg style="position:absolute;left:0;top:0" width="124.3" height="70.3"><use href="#s1" width="124.3" height="70.3"/></svg></div>
<div class="a" style="left:48px;top:345.6px;width:124px;height:70px;background:#2b2f33;border-radius:4px;box-shadow:0 0.5px 1.5px rgba(0,0,0,0.3);overflow:hidden">
<svg width="124" height="70" viewBox="0 0 124 70" style="position:absolute;left:0;top:0">
<g fill="none" stroke="#8c8c8c" stroke-width="0.8">
 <path d="M2.2 15.5V67.5M1 17H13M1 34H12M1 48.4H20M25.4 37.5V67.5M24 38.5H38"/>
 <path d="M13 13H18Q18.5 13 18.5 14V23.5Q18.5 24.5 17.5 24.5H8Q7.5 24.5 7.5 25.5V29"/>
 <path d="M9.5 28V27.5H16.5Q17 27.5 17 28.5V46"/>
 <path d="M8 56V45Q8 44 9 44H16"/>
 <path d="M18 46V31Q18 30 19 30H32Q33 30 33 31V36"/>
 <path d="M34 35H42.5Q43.5 35 43.5 36V49Q43.5 50 42.5 50H37Q36 50 36 51V57"/>
 <path d="M38 57V51Q38 50 39 50H45Q46 50 46 51V56M46 54V48Q46 47 47 47H52Q53 47 53 48V53M51 45H57Q58 45 58 46V53"/>
 <path d="M54 55H69M66.7 50.8V67M60 67H71"/>
 <path d="M1.8 67.5H72.4"/>
</g>
<path d="M5.5 13L13.5 13L12.5 19Q9.5 22 6.5 19Z" fill="#33c2ef"/>
<path d="M7 8V13M10 8V13M12.5 8V13" stroke="#d8d8d8" stroke-width="0.7"/>
<circle cx="8" cy="38" r="4" fill="#8cc63f"/><rect x="6.8" y="29" width="2.6" height="5" fill="#8cc63f"/>
<path d="M15 47H17.5V50L20 56H12.5L15 50Z" fill="#d46fb4"/>
<path d="M7.5 56H9.5V60Q11.5 62 11.5 67H5.5Q5.5 62 7.5 60Z" fill="#6a87c5"/>
<rect x="15.5" y="61" width="1.6" height="6" fill="#e6e6e6"/><circle cx="16.3" cy="59.5" r="1.2" fill="#e08d55"/><rect x="14" y="66.5" width="4.5" height="1" fill="#e6e6e6"/>
<path d="M30.5 36.5H38V41Q38 44 35 44H33.5Q30.5 44 30.5 41Z" fill="#6ac8e6"/>
<circle cx="36" cy="63.5" r="3.8" fill="#e08d55"/><rect x="35" y="57" width="2" height="4" fill="#e08d55"/>
<circle cx="28" cy="56" r="0.9" fill="#e08d55"/><circle cx="29.5" cy="58" r="0.7" fill="#e08d55"/><circle cx="31" cy="59.8" r="0.7" fill="#e08d55"/>
<rect x="42" y="60" width="9" height="6.5" fill="#cd6a24" opacity="0.85"/><rect x="43" y="59" width="7" height="4" fill="#7a9ac8" opacity="0.8"/>
<circle cx="59" cy="62" r="4" fill="#8cc63f"/><rect x="58" y="53" width="2" height="6" fill="#8cc63f"/>
<rect x="17" y="5.5" width="47" height="4.8" fill="#8a98a8" opacity="0.75"/>
<rect x="74.8" y="7" width="3" height="58" fill="#1e2124"/>
<path d="M77.5 7Q100 1.5 119.5 5.5V62Q100 58.5 77.5 63Z" fill="#f1f1f1"/>
<path d="M119.5 5.5L123.5 7V64.5L119.5 62Z" fill="#cfcfcf"/>
<path d="M77.5 63Q100 58.5 119.5 62L123.5 64.5V67.5H77.5Z" fill="#8c8c8c"/>
<g fill="#a8a8b4" opacity="0.8">
 <rect x="81" y="14.8" width="35" height="1"/><rect x="81" y="17.6" width="35" height="1"/><rect x="81" y="20.4" width="35" height="1"/><rect x="81" y="23" width="7" height="1"/>
 <rect x="81" y="30" width="35" height="1"/><rect x="81" y="32.8" width="35" height="1"/><rect x="81" y="35.6" width="35" height="1"/><rect x="81" y="38.2" width="7" height="1"/>
 <rect x="81" y="46.2" width="35" height="1"/><rect x="81" y="49" width="35" height="1"/><rect x="81" y="51.8" width="35" height="1"/><rect x="81" y="54.4" width="7" height="1"/>
</g>
</svg></div>
<div class="a" style="left:48px;top:443.2px;width:124px;height:70px;background:#2b2f33;border-radius:4px;box-shadow:0 0.5px 1.5px rgba(0,0,0,0.3);overflow:hidden">
<svg width="124" height="70" viewBox="0 0 124 70" style="position:absolute;left:0;top:0"><g fill="none" stroke-width="1.3"><path d="M8 28V10Q8 2 16 2H108Q116 2 116 10V50" stroke="#1a7a9a"/><path d="M27 23V12Q27 7 32 7H80Q86 7 86 13V50" stroke="#6ac8e6"/><path d="M45 28V18Q45 12 52 12Q58 12 58 18V50" stroke="#d8e8ee"/></g>
<path d="M6 30L14 26L24 42L24 20H32V42L40 24L48 28L40 44Q46 50 44 56Q40 68 28 68Q16 68 12 56Q10 48 16 44Z" fill="#33c2ef"/>
<rect x="4" y="27" width="10" height="3" fill="#1a7a9a" transform="rotate(-25 9 28)"/><rect x="22" y="18" width="12" height="2.5" fill="#6ac8e6"/><rect x="42" y="25" width="10" height="3" fill="#e8f0f4" transform="rotate(25 47 27)"/>
<rect x="17" y="52" width="22" height="4" fill="#e0f4fc" opacity="0.8"/>
<g fill="#c8c8c8" opacity="0.55"><rect x="52" y="49" width="20" height="1.5"/><rect x="51" y="53" width="22" height="1.5"/><rect x="77" y="49" width="20" height="1.5"/><rect x="76" y="53" width="22" height="1.5"/><rect x="102" y="49" width="20" height="1.5"/><rect x="101" y="53" width="22" height="1.5"/></g>
<path d="M75 56V68M99 56V68" stroke="#9a9a9a" stroke-width="0.8"/></svg></div>
<div class="a" style="left:48px;top:540.3px;width:124px;height:70px;background:#2b2f33;border-radius:4px;box-shadow:0 0.5px 1.5px rgba(0,0,0,0.3);overflow:hidden">
<svg width="124" height="70" viewBox="0 0 124 70" style="position:absolute;left:0;top:0"><path d="M24.1 8.7L14.7 21.5" stroke="#9aa0a8" stroke-width="2.2" stroke-linecap="round"/><path d="M20.1 14.2L14.7 21.5" stroke="#8cc63f" stroke-width="2.4" stroke-linecap="round"/><ellipse cx="25.6" cy="6.2" rx="2.6" ry="3.8" transform="rotate(395 25.6 6.2)" fill="#f4f4f4"/><path d="M14.2 24.0Q16.3 27.0 14.2 28.3Q12.1 27.0 14.2 24.0Z" fill="#8cc63f"/><path d="M33.7 8.7L24.3 21.5" stroke="#9aa0a8" stroke-width="2.2" stroke-linecap="round"/><path d="M29.7 14.2L24.3 21.5" stroke="#d46fb4" stroke-width="2.4" stroke-linecap="round"/><ellipse cx="35.2" cy="6.2" rx="2.6" ry="3.8" transform="rotate(395 35.2 6.2)" fill="#f4f4f4"/><path d="M23.8 24.0Q25.9 27.0 23.8 28.3Q21.7 27.0 23.8 24.0Z" fill="#d46fb4"/><path d="M43.3 8.7L33.9 21.5" stroke="#9aa0a8" stroke-width="2.2" stroke-linecap="round"/><path d="M39.3 14.2L33.9 21.5" stroke="#6a87c5" stroke-width="2.4" stroke-linecap="round"/><ellipse cx="44.8" cy="6.2" rx="2.6" ry="3.8" transform="rotate(395 44.8 6.2)" fill="#f4f4f4"/><path d="M33.4 24.0Q35.5 27.0 33.4 28.3Q31.3 27.0 33.4 24.0Z" fill="#6a87c5"/><path d="M52.9 8.7L43.5 21.5" stroke="#9aa0a8" stroke-width="2.2" stroke-linecap="round"/><path d="M48.9 14.2L43.5 21.5" stroke="#e08d55" stroke-width="2.4" stroke-linecap="round"/><ellipse cx="54.4" cy="6.2" rx="2.6" ry="3.8" transform="rotate(395 54.4 6.2)" fill="#f4f4f4"/><path d="M43.0 24.0Q45.1 27.0 43.0 28.3Q40.9 27.0 43.0 24.0Z" fill="#e08d55"/><path d="M11.8 30.6H17.6V56.8A2.9 2.9 0 0 1 11.8 56.8Z" fill="#eceef2"/><path d="M12.9 33.4H16.5V56.8A1.8 1.8 0 0 1 12.9 56.8Z" fill="#8cc63f"/><path d="M20.8 30.6H26.6V56.8A2.9 2.9 0 0 1 20.8 56.8Z" fill="#eceef2"/><path d="M21.9 40.6H25.5V56.8A1.8 1.8 0 0 1 21.9 56.8Z" fill="#d46fb4"/><path d="M30.4 30.6H36.2V56.8A2.9 2.9 0 0 1 30.4 56.8Z" fill="#eceef2"/><path d="M31.5 38.7H35.1V56.8A1.8 1.8 0 0 1 31.5 56.8Z" fill="#6a87c5"/><path d="M39.7 30.6H45.5V56.8A2.9 2.9 0 0 1 39.7 56.8Z" fill="#eceef2"/><path d="M40.8 35.3H44.4V56.8A1.8 1.8 0 0 1 40.8 56.8Z" fill="#e08d55"/><path d="M7 49H51.4M9.4 49V62.5M48.5 49V62.5M7 62.5H51.4" stroke="#8a8a8a" stroke-width="1.3" fill="none"/><g stroke="#d0d0d0" stroke-width="0.6" fill="none" opacity="0.8"><path d="M6 10L8 8.5L10 10L12 9M9 8.5V6.5M53 23L55 21.5L57 23L59 22M56 21.5V19.5M59 58L61 56.5L63 58L65 57M62 56.5V54"/></g><rect x="72.9" y="8.6" width="7" height="2" rx="1" fill="#eee"/><rect x="76" y="8.8" width="4" height="1.6" fill="#8cc63f"/><rect x="72.9" y="23.8" width="7" height="2" rx="1" fill="#eee"/><rect x="76" y="24.0" width="4" height="1.6" fill="#d46fb4"/><rect x="72.9" y="39.4" width="7" height="2" rx="1" fill="#eee"/><rect x="76" y="39.6" width="4" height="1.6" fill="#6a87c5"/><rect x="72.9" y="54.6" width="7" height="2" rx="1" fill="#eee"/><rect x="76" y="54.8" width="4" height="1.6" fill="#e08d55"/><g fill="#d0d0d8" opacity="0.5"><rect x="82.4" y="5.2" width="37.7" height="2.2"/><rect x="82.4" y="10.5" width="37.7" height="2.2"/><rect x="82.4" y="21.0" width="37.7" height="2.2"/><rect x="82.4" y="26.0" width="37.7" height="2.2"/><rect x="82.4" y="36.3" width="37.7" height="2.2"/><rect x="82.4" y="40.5" width="37.7" height="2.2"/><rect x="82.4" y="51.0" width="37.7" height="2.2"/><rect x="82.4" y="55.8" width="37.7" height="2.2"/></g></svg></div>
<div class="a" style="left:48px;top:637.0px;width:124px;height:70px;background:#2b2f33;border-radius:4px;box-shadow:0 0.5px 1.5px rgba(0,0,0,0.3);overflow:hidden">
<svg width="124" height="70" viewBox="0 0 124 70" style="position:absolute;left:0;top:0"><rect x="2.7" y="2.2" width="31" height="4.3" fill="#b8bcc8" opacity="0.55"/><path d="M19.9 43.8L50 5.1V9.9Z" fill="#d4d4d4"/><path d="M25.6 44.7L50 20.9V25.1Z" fill="#d4d4d4"/><path d="M32.3 45.2L50 37V40.9Z" fill="#d4d4d4"/><path d="M34.7 46.6L50 52.3V56.2Z" fill="#d4d4d4"/><rect x="52.3" y="5.1" width="13.4" height="4.8" fill="#dcdcdc"/><rect x="56.2" y="5.5" width="4.8" height="4.0" fill="#e08d55"/><rect x="52.3" y="20.9" width="13.4" height="4.2" fill="#dcdcdc"/><rect x="56.2" y="21.3" width="4.8" height="3.4" fill="#6a87c5"/><rect x="52.3" y="37" width="13.4" height="3.9" fill="#dcdcdc"/><rect x="56.2" y="37.4" width="4.8" height="3.1" fill="#d46fb4"/><rect x="52.3" y="52.3" width="13.4" height="3.9" fill="#dcdcdc"/><rect x="56.2" y="52.7" width="4.8" height="3.1" fill="#8cc63f"/><g fill="#c8c8d2" opacity="0.55"><rect x="68.6" y="5.1" width="39.6" height="2"/><rect x="68.6" y="10.8" width="39.6" height="2"/><rect x="68.6" y="20.3" width="39.6" height="2"/><rect x="68.6" y="26.0" width="39.6" height="2"/><rect x="68.6" y="37.0" width="39.6" height="2"/><rect x="68.6" y="41.8" width="39.6" height="2"/><rect x="68.6" y="52.3" width="39.6" height="2"/><rect x="68.6" y="58.0" width="39.6" height="2"/></g><path d="M15.82 32.12A12.3 12.3 0 1 0 26.91 53.42" fill="none" stroke="#808080" stroke-width="2.7"/><path d="M12.7 57.1H20.9L27 65.7H7Z" fill="#808080"/><g transform="rotate(-16 19.5 29)" fill="#33c2ef"><rect x="16.5" y="20" width="6" height="19" rx="1.8"/><rect x="17.6" y="17.5" width="3.8" height="5" rx="1"/></g><circle cx="15" cy="29" r="2.2" fill="#33c2ef"/><circle cx="15" cy="29" r="1" fill="#2b2f33"/><rect x="17.5" y="46.1" width="15.3" height="1.5" fill="#d8d8d8"/><rect x="14.7" y="48.5" width="21.4" height="2.4" fill="#33c2ef"/></svg></div>
<div class="a" style="left:48px;top:734.3px;width:124px;height:70px;background:#2b2f33;border-radius:4px;box-shadow:0 0.5px 1.5px rgba(0,0,0,0.3);overflow:hidden">
<svg width="124" height="70" viewBox="0 0 124 70" style="position:absolute;left:0;top:0">
<g fill="none" stroke-width="0.9">
 <path d="M11 11V5.5H29V8" stroke="#7a90c0"/>
 <path d="M7 11V27M8 25H12V46H17V50H38V55" stroke="#7a8c94"/>
 <path d="M35 5H53V11M53 8H45V24H56V31" stroke="#a07c62"/>
 <path d="M39 55L48 50V30H56" stroke="#9a76a0"/>
 <path d="M58 29H63V50H71" stroke="#6a9a48"/>
</g>
<path d="M8 11H17.5V20Q17.5 22 15.5 22H10Q8 22 8 20Z" fill="#6a87c5"/>
<rect x="25.5" y="11" width="11" height="3" fill="#cd6a24"/>
<g fill="#eef0f6"><rect x="26.5" y="5" width="2" height="7"/><rect x="29.5" y="5" width="2" height="7"/><rect x="32.5" y="5" width="2" height="7"/></g>
<circle cx="53.3" cy="17.6" r="5" fill="#e08d55"/><rect x="51.8" y="9" width="3" height="5" fill="#e08d55"/><path d="M57 14L60.5 11L61.5 12.5L58 15.5Z" fill="#e08d55"/>
<path d="M62 12L64.5 8.5M64 7L65.5 5.5" stroke="#eee" stroke-width="0.9"/>
<path d="M5 27H8V31L10.8 39.6H2.2L5 31Z" fill="#a6b9dd"/>
<path d="M5.5 42Q6 40 6.3 41.5Q7.5 42.5 6.5 44Z" fill="#e08d55"/><rect x="5.2" y="44.5" width="2" height="6" fill="#e6e6e6"/><rect x="3.5" y="50.5" width="6" height="1" fill="#e6e6e6"/>
<circle cx="12.3" cy="59.2" r="4.2" fill="#6ac8e6"/><rect x="11" y="51" width="2.6" height="5" fill="#6ac8e6"/>
<path d="M8.5 53H20.5M18 50V65M9 65H21" stroke="#9a9a9a" stroke-width="0.9"/>
<path d="M36 57H41V60L43.8 67.7H33.7L36 60Z" fill="#d46fb4"/>
<circle cx="56.4" cy="42.5" r="4.5" fill="#8cc63f"/><rect x="55.2" y="32" width="2.4" height="7" fill="#8cc63f"/>
<path d="M56.5 49Q57.3 47.5 57.5 49.5Q58.5 50.5 57 52Z" fill="#e08d55"/><rect x="55.5" y="52" width="2" height="6" fill="#e6e6e6"/><rect x="54" y="58" width="5.5" height="1" fill="#e6e6e6"/>
<polygon points="30.01,24.85 27.50,26.30 24.99,24.85 24.99,21.95 27.50,20.50 30.01,21.95" fill="#8ea6d8"/><polygon points="27.21,28.65 24.70,30.10 22.19,28.65 22.19,25.75 24.70,24.30 27.21,25.75" fill="#6a87c5"/><polygon points="32.91,28.65 30.40,30.10 27.89,28.65 27.89,25.75 30.40,24.30 32.91,25.75" fill="#6a87c5"/><polygon points="38.61,29.15 36.10,30.60 33.59,29.15 33.59,26.25 36.10,24.80 38.61,26.25" fill="#e08d55"/><polygon points="35.81,34.35 33.30,35.80 30.79,34.35 30.79,31.45 33.30,30.00 35.81,31.45" fill="#e08d55"/><polygon points="41.51,34.35 39.00,35.80 36.49,34.35 36.49,31.45 39.00,30.00 41.51,31.45" fill="#5e9a2e"/><polygon points="27.21,35.35 24.70,36.80 22.19,35.35 22.19,32.45 24.70,31.00 27.21,32.45" fill="#6ac8e6"/><polygon points="30.01,39.15 27.50,40.60 24.99,39.15 24.99,36.25 27.50,34.80 30.01,36.25" fill="#6ac8e6"/><polygon points="32.91,39.65 30.40,41.10 27.89,39.65 27.89,36.75 30.40,35.30 32.91,36.75" fill="#d46fb4"/>
<rect x="74.3" y="3.8" width="45.7" height="6" rx="1.5" fill="none" stroke="#7ab840" stroke-width="0.8"/>
<rect x="77" y="5.2" width="36" height="2.6" fill="#c8ccd4" opacity="0.7"/>
<rect x="71" y="8.6" width="52" height="60" rx="3" fill="#3b4046" stroke="#7ab840" stroke-width="0.9"/>
<path d="M97.26 36.02L98.83 18.09A18 18 0 1 1 86.18 50.20Z" fill="#5e9a2e"/><path d="M95.53 36.05L83.93 48.48A17 17 0 0 1 79.88 29.41Z" fill="#7ab838"/><path d="M95.85 34.95L81.15 27.46A16.5 16.5 0 0 1 88.36 20.25Z" fill="#a8d070"/><path d="M96.51 34.82L90.26 20.09A16 16 0 0 1 96.79 18.82Z" fill="#c8e0a8"/>
<g fill="#d8dce4" opacity="0.6"><rect x="77.2" y="57" width="40" height="1.6"/><rect x="77.2" y="60.5" width="40" height="1.6"/><rect x="81" y="64" width="32" height="1.6"/></g>
</svg></div>
<div class="a" style="left:48px;top:831.0px;width:124px;height:67px;background:#2b2f33;border-radius:4px 4px 0 0;box-shadow:0 0.5px 1.5px rgba(0,0,0,0.3);overflow:hidden">
<svg width="124" height="70" viewBox="0 0 124 70" style="position:absolute;left:0;top:0"><rect x="3" y="3" width="30" height="4" fill="#aab" opacity="0.75"/>
<g fill="#c8c8c8" opacity="0.6"><rect x="2" y="24" width="30" height="1.6"/><rect x="2" y="28" width="30" height="1.6"/><rect x="44" y="13" width="32" height="1.6"/><rect x="44" y="17" width="32" height="1.6"/><rect x="84" y="7" width="32" height="1.6"/><rect x="84" y="11" width="32" height="1.6"/></g>
<g fill="none" stroke="#8a8a8a" stroke-width="0.9"><path d="M8 32V70M47 21V70M86 14V70M10 50H20V55M54 38H62V56M88 46H108V30M108 30H118V60"/></g>
<circle cx="13" cy="56" r="3.5" fill="#8cc63f"/><circle cx="52" cy="43" r="3.5" fill="#8cc63f"/><circle cx="114" cy="44" r="3.5" fill="#8cc63f"/><rect x="96" y="42" width="6" height="5" fill="#6ac8e6"/><path d="M108 22H116L114 27H110Z" fill="#33c2ef"/><path d="M57 50H62L64 56H55Z" fill="#d46fb4"/><path d="M106 50H111L113 56H104Z" fill="#d46fb4"/><circle cx="92" cy="68" r="4" fill="#e08d55"/><path d="M20 62H25L26 68H19Z" fill="#6a87c5"/><path d="M54 62H59L60 68H53Z" fill="#6a87c5"/><path d="M111 62H116L117 68H110Z" fill="#6a87c5"/></svg></div>
<div class="a" style="left:222px;top:786px;width:1140px;height:1px;background:#c8c8c8"></div>
<div class="a" style="left:235px;top:795.5px;width:1120px;font-size:18px;line-height:22.5px;white-space:nowrap;letter-spacing:0.34px;color:#555;">化学反应是指分子破裂成原子，原子重新排列组合生成新分子的过程。在反应中常伴有发光、发热、变色、生成沉淀物等，判断一个反<br>应是否为化学反应的依据是反应是否生成新的分子。</div>
<div class="a" style="left:208.3px;top:782.4px;width:1134.7px;height:88.4px;border:7.8px solid #ed1c24;border-radius:4px"></div>
<svg class="a" style="left:220px;top:525px" width="60" height="250" viewBox="220 525 60 250">
<path d="M227.8 531.5Q229 529 231 531L257.8 729L269 725L252.8 768.6L228.9 729.3L240.1 729Z" fill="#ed1c24"/>
</svg>
<div class="st" style="left:16px">幻灯片 第 1 张，共 21 张</div>
<div class="st" style="left:224.3px">简体中文(中国大陆)</div>
<div class="st" style="left:396.8px;font-weight:bold">辅助功能: 调查</div>
<div class="st" style="left:766.2px">备注</div>
<div class="st" style="left:842.9px">批注</div>
<div class="st" style="left:1275.7px;font-size:16px;top:902px">60%</div>
<div class="a" style="left:897px;top:899px;width:50px;height:26px;background:#dadada"></div>
<svg class="a" style="left:0;top:898px" width="1363" height="28" viewBox="0 898 1363 28">
<g fill="none" stroke="#3a3a3a" stroke-width="1.2">
 <circle cx="382.7" cy="906.2" r="2.3"/>
 <path d="M385.8 910.8L389.5 909.2Q391.3 908 390 906.5Q389 905.8 387.5 906.6L385.2 908M380.2 908L377.8 906.6Q376.3 905.8 375.5 906.8Q374.8 908.2 376.5 909.2L379.6 910.8V914.8L378 919Q377.6 920.9 379.5 921Q380.8 920.9 381.3 919.5L382.6 915.5L384 917.8"/>
 <path d="M384.5 912.2L392.5 920.6M392.4 912.2L384.4 920.6" stroke-width="1"/>
 <path d="M751 907.5L755 903.5L759 907.5M745 911H765M745 916.3H765M745 921.5H765"/>
 <path d="M822.5 904.5H840V916H829L824 920.5V916H822.5Z"/>
 <rect x="914" y="904.5" width="16" height="14"/><rect x="917" y="907.5" width="10" height="6"/><path d="M917 916.5H927"/>
 <rect x="963.5" y="904.5" width="6.5" height="6"/><rect x="974" y="904.5" width="6.5" height="6"/><rect x="963.5" y="913.5" width="6.5" height="6"/><rect x="974" y="913.5" width="6.5" height="6"/>
 <path d="M1013.5 905.5H1029.5V919.5H1013.5ZM1021.5 905.5V919.5M1016 909H1019M1016 912H1019M1016 915H1019M1024 909H1027M1024 912H1027M1024 915H1027"/>
 <path d="M1063.5 904.5H1079.5M1065 904.5V914H1078V904.5M1071.5 914V920.5M1067.5 920.5H1075.5"/>
 <path d="M1104 912H1113M1250 912H1260M1255 907V917"/>
 <path d="M1325 912L1328.5 908.5M1325 912L1328.5 915.5M1341 912L1337.5 908.5M1341 912L1337.5 915.5M1333 903.5L1329.5 907M1333 903.5L1336.5 907M1333 920.5L1329.5 917M1333 920.5L1336.5 917"/>
 <rect x="1329.5" y="908.5" width="7" height="7"/>
</g>
<path d="M1120 911.5H1245M1182 908V915" stroke="#6a6a6a" stroke-width="1"/>
<rect x="1153.5" y="904" width="6" height="15" fill="#5a5a5a"/>
</svg>

<!-- window borders -->
<div class="a" style="left:0;top:61px;width:1px;height:865px;background:#c43e1c"></div>
<div class="a" style="left:1362px;top:61px;width:1px;height:865px;background:#c43e1c"></div>
<div class="a" style="left:0;top:925px;width:1363px;height:1px;background:#c43e1c"></div>

</body></html>
